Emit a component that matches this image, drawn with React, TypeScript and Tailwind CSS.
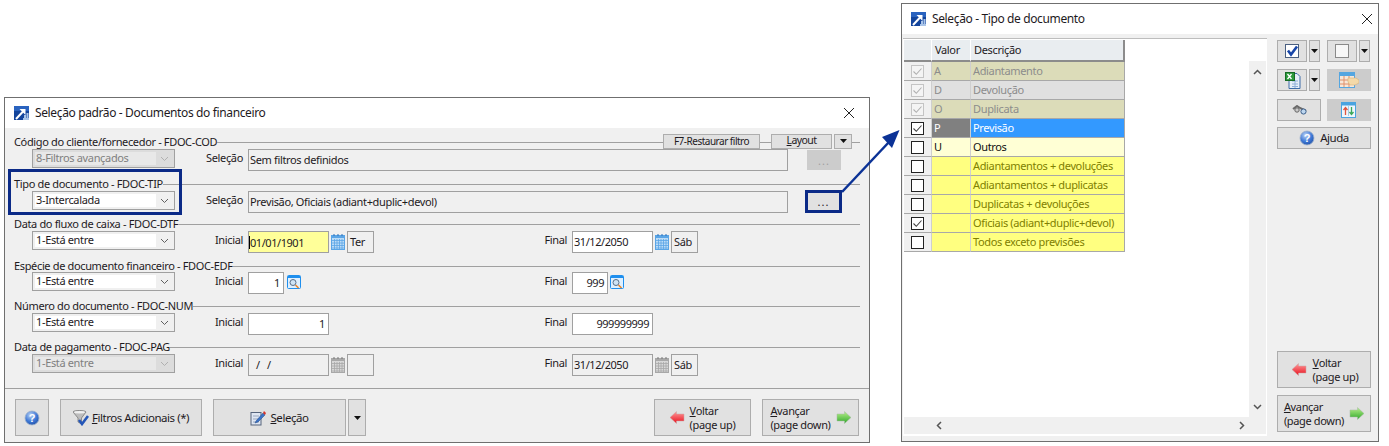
import React from "react";

const Logo = () => (
  <svg width="16" height="16" viewBox="0 0 16 16" className="shrink-0">
    <rect x="0" y="1" width="15" height="14" fill="#14459c" />
    <rect x="0" y="1" width="15" height="5" fill="#2a63bf" />
    <path d="M9 13h6v2H9zM10 10h2v3h-2zM12.500 8h2v5h-2z" fill="#a9c4e8" />
    <path d="M2 14 L9 6.500" stroke="#fff" strokeWidth="2" />
    <path d="M5.500 4h6v6z" fill="#fff" />
  </svg>
);

const CloseX = () => (
  <svg width="12" height="12" viewBox="0 0 12 12">
    <path d="M1 1l10 10M11 1L1 11" stroke="#222" strokeWidth="1" />
  </svg>
);

const Chevron = ({ muted }: { muted?: boolean }) => (
  <svg width="9" height="6" viewBox="0 0 9 6">
    <path d="M1 1l3.500 3.500L8 1" fill="none" stroke={muted ? "#b0b0b0" : "#606060"} strokeWidth="1" />
  </svg>
);

const Calendar = ({ off }: { off?: boolean }) => {
  const a = off ? "#a8a8a8" : "#5aa5e6";
  const b = off ? "#d8d8d8" : "#bcdcf7";
  return (
    <svg width="14" height="16" viewBox="0 0 14 16" className="shrink-0">
      <rect x="0.500" y="1.500" width="13" height="14" fill={b} stroke={a} />
      <rect x="1" y="1" width="12" height="3" fill={a} />
      <path d="M1 6.500h12M1 9h12M1 11.500h12M1 14h12M3.500 5v10M6 5v10M8.500 5v10M11 5v10" stroke={a} strokeWidth="0.800" />
      <path d="M3 0v2M7 0v2M11 0v2" stroke={off ? "#777" : "#2a6fb8"} />
    </svg>
  );
};

const Lookup = () => (
  <svg width="14" height="14" viewBox="0 0 14 14" className="shrink-0">
    <rect x="0.500" y="0.500" width="13" height="13" rx="1" fill="#dff0ff" stroke="#1f8fee" />
    <rect x="1" y="1" width="12" height="2" fill="#1f8fee" />
    <circle cx="6" cy="7.500" r="3" fill="#cfe4f5" stroke="#5a6f88" />
    <path d="M8.500 10l3 3" stroke="#e8862a" strokeWidth="1.600" />
  </svg>
);

const Help = ({ size = 16, id }: { size?: number; id: string }) => (
  <svg width={size} height={size} viewBox="0 0 16 16" className="shrink-0">
    <defs>
      <radialGradient id={id} cx="0.400" cy="0.300" r="0.800">
        <stop offset="0" stopColor="#bcd3f5" />
        <stop offset="0.550" stopColor="#3f79d6" />
        <stop offset="1" stopColor="#1c4aa0" />
      </radialGradient>
    </defs>
    <circle cx="8" cy="8" r="7" fill={`url(#${id})`} stroke="#9fb2cc" strokeWidth="0.800" />
    <text x="8" y="12" textAnchor="middle" fontSize="11" fontWeight="700" fill="#fff" fontFamily="Liberation Sans">?</text>
  </svg>
);

const Funnel = () => (
  <svg width="16" height="16" viewBox="0 0 16 16" className="shrink-0">
    <path d="M0 2C0 0 13 0 13 2L8.500 8v6l-3.500-2V8z" fill="#bdbdbd" stroke="#6f6f6f" strokeWidth="0.700" />
    <ellipse cx="6.500" cy="2.200" rx="5.500" ry="1.200" fill="#f0f0f0" />
    <path d="M6 10l3 4 6-8" fill="none" stroke="#2456b8" strokeWidth="2.600" />
  </svg>
);

const Pencil = () => (
  <svg width="16" height="16" viewBox="0 0 16 16" className="shrink-0">
    <rect x="1" y="2.500" width="10" height="12.500" fill="#dfe6f2" stroke="#56647c" strokeWidth="1" />
    <path d="M3 6h6M3 9h6M3 12h6" stroke="#9aa8bf" />
    <path d="M6 11l7-8 2 2-7 7-3 1z" fill="#3a72c8" stroke="#254a85" strokeWidth="0.500" />
    <path d="M13 3l1-2 2 2-1 2z" fill="#d8352a" />
  </svg>
);

const ArrowLeft = ({ id }: { id: string }) => (
  <svg width="15" height="13" viewBox="0 0 15 13" className="shrink-0">
    <defs>
      <linearGradient id={id} x1="0" y1="0" x2="0" y2="1">
        <stop offset="0" stopColor="#ff9a9a" />
        <stop offset="1" stopColor="#e8101e" />
      </linearGradient>
    </defs>
    <path d="M0 6.500L6.500 0.500V3H14V10H6.500V12.500z" fill={`url(#${id})`} stroke="#c9a5a5" strokeWidth="0.500" />
  </svg>
);

const ArrowRight = ({ id }: { id: string }) => (
  <svg width="15" height="13" viewBox="0 0 15 13" className="shrink-0">
    <defs>
      <linearGradient id={id} x1="0" y1="0" x2="0" y2="1">
        <stop offset="0" stopColor="#b8f08a" />
        <stop offset="1" stopColor="#2fa82a" />
      </linearGradient>
    </defs>
    <path d="M15 6.500L8.500 0.500V3H1V10H8.500V12.500z" fill={`url(#${id})`} stroke="#a5b8a5" strokeWidth="0.500" />
  </svg>
);

const DropGlyph = () => (
  <svg width="7" height="4" viewBox="0 0 7 4">
    <path d="M0 0h7L3.500 4z" fill="#111" />
  </svg>
);

const Btn = ({ className = "", children }: { className?: string; children?: React.ReactNode }) => (
  <div className={`flex items-center justify-center border shrink-0 ${className}`}>{children}</div>
);
const ON = "bg-[#e1e1e1] border-[#adadad]";
const DIS = "bg-[#cccccc] border-[#cccccc]";

const Combo = ({ value, off }: { value: string; off?: boolean }) => (
  <div className={`w-[143px] h-[19px] shrink-0 flex border border-[#a0a0a0] p-[2px] ${off ? "bg-[#dcdcdc]" : "bg-[#f0f0f0]"}`}>
    <div className={`w-[121px] h-[13px] flex items-center pl-[1px] ${off ? "bg-[#e8e8e8] text-[#808080]" : "bg-white"}`}>{value}</div>
    <div className="flex-1 flex items-center justify-center pl-[1px]">
      <Chevron muted={off} />
    </div>
  </div>
);

const Field = ({ className = "", right, children }: { className?: string; right?: boolean; children?: React.ReactNode }) => (
  <div className={`h-[22px] shrink-0 flex items-center border border-[#a0a0a0] ${right ? "justify-end" : ""} ${className}`}>
    {children}
  </div>
);

const Section = ({ title, className, legendClass = "h-[14px]", extra, children }: { title: string; className: string; legendClass?: string; extra?: React.ReactNode; children?: React.ReactNode }) => (
  <div className={`pl-[9px] pr-[9px] ${className}`}>
    <div className={`flex items-center ${legendClass}`}>
      <span className="whitespace-nowrap">{title}</span>
      {extra ?? <div className="flex-1 h-px bg-[#a0a0a0]" />}
    </div>
    {children}
  </div>
);

const Row = ({ value, off, label, left, final }: { value: string; off?: boolean; label: string; left: React.ReactNode; final?: React.ReactNode }) => (
  <div className="flex items-start">
    <div className="w-[506px] pl-[18px] flex items-start">
      <Combo value={value} off={off} />
      <div className="w-[73px] h-[19px] flex items-center justify-end pr-[5px] shrink-0">{label}</div>
      {left}
    </div>
    {final && (
      <div className="flex items-start">
        <div className="w-[52px] h-[19px] flex items-center justify-end pr-[5px] shrink-0">Final</div>
        {final}
      </div>
    )}
  </div>
);

const DateGroup = ({ date, day, off, caret, yellow }: { date: React.ReactNode; day?: string; off?: boolean; caret?: boolean; yellow?: boolean }) => (
  <div className="flex items-start">
    <Field className={`w-[81px] tracking-[-0.45px] ${yellow ? "bg-[#ffff99]" : off ? "bg-[#f0f0f0]" : "bg-white"}`}>
      {caret ? <span className="border-l border-black leading-[13px]">{date}</span> : <span className="pl-px">{date}</span>}
    </Field>
    <div className="ml-[2px] mt-[3px]">
      <Calendar off={off} />
    </div>
    <div className="ml-[2px] w-[27px] h-[22px] border border-[#a0a0a0] flex items-center pl-[2px] bg-[#f0f0f0]">{day}</div>
  </div>
);

const rows: { v: string; d: string; check: "dis" | "on" | "off"; kind: string }[] = [
  { v: "A", d: "Adiantamento", check: "dis", kind: "tan" },
  { v: "D", d: "Devolução", check: "dis", kind: "gray" },
  { v: "O", d: "Duplicata", check: "dis", kind: "tan" },
  { v: "P", d: "Previsão", check: "on", kind: "sel" },
  { v: "U", d: "Outros", check: "off", kind: "cream" },
  { v: "", d: "Adiantamentos + devoluções", check: "off", kind: "yel" },
  { v: "", d: "Adiantamentos + duplicatas", check: "off", kind: "yel" },
  { v: "", d: "Duplicatas + devoluções", check: "off", kind: "yel" },
  { v: "", d: "Oficiais (adiant+duplic+devol)", check: "on", kind: "yel" },
  { v: "", d: "Todos exceto previsões", check: "off", kind: "yel" },
];

const cellStyle: Record<string, [string, string]> = {
  tan: ["bg-[#dcdcb9] text-[#8c8c8c]", "bg-[#dcdcb9] text-[#8c8c8c]"],
  gray: ["bg-[#e0e0e0] text-[#8c8c8c]", "bg-[#e0e0e0] text-[#8c8c8c]"],
  sel: ["bg-[#808080] text-white", "bg-[#3399ff] text-white"],
  cream: ["bg-[#ffffd5] text-[#111]", "bg-[#ffffd5] text-[#111]"],
  yel: ["bg-[#ffff80] text-[#808000]", "bg-[#ffff80] text-[#808000]"],
};

const Check = ({ state }: { state: "dis" | "on" | "off" }) => (
  <svg width="13" height="13" viewBox="0 0 13 13">
    <rect x="0.500" y="0.500" width="12" height="12" fill={state === "dis" ? "#f4f4f4" : "#fff"} stroke={state === "dis" ? "#c4c4c4" : "#222"} />
    {state !== "off" && <path d="M2.500 6.500l2.800 2.800L10.500 3.500" fill="none" stroke={state === "dis" ? "#b0b0b0" : "#444"} strokeWidth="1.100" />}
  </svg>
);

const Dots = ({ muted }: { muted?: boolean }) => (
  <span className={`tracking-[1px] leading-none ${muted ? "text-[#a0a0a0]" : ""}`}>...</span>
);

export default function App() {
  return (
    <div className="relative w-[1389px] h-[446px] bg-white overflow-hidden font-['Noto_Sans',sans-serif] text-[11px] tracking-[-0.35px] text-[#1e1a1e]">
      {/* left window */}
      <div className="absolute left-[4px] top-[97px] w-[866px] h-[346px] border border-[#6f6f6f] bg-[#f0f0f0] flex flex-col">
        <div className="h-[30px] bg-white flex items-center pl-[9px] pr-[14px] gap-[5px] text-[12px] tracking-[-0.37px]">
          <Logo />
          <span className="flex-1">Seleção padrão - Documentos do financeiro</span>
          <CloseX />
        </div>
        <div className="flex-1 pt-[7px] flex flex-col">
          <Section
            title="Código do cliente/fornecedor - FDOC-COD"
            className="h-[42px]"
            extra={
              <div className="flex-1 flex items-center">
                <div className="flex-1 h-px bg-[#a0a0a0]" />
                <Btn className={`w-[97px] h-[15px] -mt-[2px] text-[10px] tracking-[-0.5px] ${ON}`}>F7-Restaurar filtro</Btn>
                <div className="w-[11px] h-px bg-[#a0a0a0]" />
                <Btn className={`w-[61px] h-[15px] -mt-[2px] text-[10.500px] tracking-[-0.6px] ${ON}`}>
                  <span><u>L</u>ayout</span>
                </Btn>
                <Btn className={`w-[18px] h-[15px] -mt-[2px] ml-[2px] ${ON}`}><DropGlyph /></Btn>
                <div className="w-[8px] h-px bg-[#a0a0a0]" />
              </div>
            }
          >
            <div className="flex items-start pl-[18px]">
              <Combo value="8-Filtros avançados" off />
              <div className="w-[73px] h-[19px] flex items-center justify-end pr-[5px] shrink-0">Seleção</div>
              <Field className="w-[540px] pl-[1px] bg-[#f0f0f0]">Sem filtros definidos</Field>
              <Btn className={`w-[34px] h-[20px] ml-[19px] mt-[1px] ${DIS}`}><Dots muted /></Btn>
            </div>
          </Section>
          <Section title="Tipo de documento - FDOC-TIP" className="h-[40px]">
            <div className="flex items-start pl-[18px]">
              <Combo value="3-Intercalada" />
              <div className="w-[73px] h-[19px] flex items-center justify-end pr-[5px] shrink-0">Seleção</div>
              <Field className="w-[540px] pl-[1px] bg-[#f0f0f0]">Previsão, Oficiais (adiant+duplic+devol)</Field>
              <Btn className={`w-[35px] h-[21px] ml-[18px] ${ON}`}><Dots /></Btn>
            </div>
          </Section>
          <Section title="Data do fluxo de caixa - FDOC-DTF" className="h-[43px]">
            <Row value="1-Está entre" label="Inicial" left={<DateGroup date="01/01/1901" day="Ter" caret yellow />} final={<DateGroup date="31/12/2050" day="Sáb" />} />
          </Section>
          <Section title="Espécie de documento financeiro - FDOC-EDF" className="h-[39px]" legendClass="h-[12px]">
            <Row
              value="1-Está entre"
              label="Inicial"
              left={
                <div className="flex items-start">
                  <Field right className="w-[36px] pr-[3px] bg-white">1</Field>
                  <div className="ml-[3px] mt-[3px]"><Lookup /></div>
                </div>
              }
              final={
                <div className="flex items-start">
                  <Field right className="w-[36px] pr-[3px] bg-white tracking-[-0.45px]">999</Field>
                  <div className="ml-[2px] mt-[3px]"><Lookup /></div>
                </div>
              }
            />
          </Section>
          <Section title="Número do documento - FDOC-NUM" className="h-[42px]">
            <Row
              value="1-Está entre"
              label="Inicial"
              left={<Field right className="w-[81px] pr-[3px] bg-white">1</Field>}
              final={<Field right className="w-[81px] pr-[3px] bg-white tracking-[-0.45px]">999999999</Field>}
            />
          </Section>
          <Section title="Data de pagamento - FDOC-PAG" className="h-[47px]" legendClass="h-[13px]">
            <Row
              value="1-Está entre"
              off
              label="Inicial"
              left={<DateGroup date={<span className="pl-[6px] tracking-[7px]">//</span>} off />}
              final={<DateGroup date="31/12/2050" day="Sáb" off />}
            />
          </Section>
          <div className="border-t border-[#a0a0a0] flex-1 pt-[10px] pl-[10px] pr-[10px] flex items-start">
            <Btn className={`w-[34px] h-[37px] ${ON}`}><Help id="h1" /></Btn>
            <Btn className={`w-[142px] h-[37px] ml-[11px] gap-[3px] text-[11.500px] tracking-[-0.45px] ${ON}`}>
              <Funnel />
              <span><u>F</u>iltros Adicionais (*)</span>
            </Btn>
            <Btn className={`w-[133px] h-[37px] ml-[11px] gap-[4px] text-[11.500px] tracking-[-0.45px] ${ON}`}>
              <Pencil />
              <span><u>S</u>eleção</span>
            </Btn>
            <Btn className={`w-[18px] h-[37px] ml-[2px] ${ON}`}><DropGlyph /></Btn>
            <Btn className={`w-[97px] h-[37px] ml-auto gap-[5px] ${ON}`}>
              <ArrowLeft id="al1" />
              <span className="leading-[14px]"><u>V</u>oltar<br />(page up)</span>
            </Btn>
            <Btn className={`w-[97px] h-[37px] ml-[11px] gap-[5px] ${ON}`}>
              <span className="leading-[14px]"><u>A</u>vançar<br />(page down)</span>
              <ArrowRight id="ar1" />
            </Btn>
          </div>
        </div>
      </div>

      {/* right window */}
      <div className="absolute left-[901px] top-[3px] w-[478px] h-[439px] border border-[#6f6f6f] bg-[#f0f0f0] flex flex-col">
        <div className="h-[30px] bg-white flex items-center pl-[9px] pr-[5px] gap-[5px] text-[12px] tracking-[-0.37px]">
          <Logo />
          <span className="flex-1">Seleção - Tipo de documento</span>
          <CloseX />
        </div>
        <div className="flex-1 flex min-h-0">
          <div className="ml-[1px] mt-[4px] mb-[5px] w-[364px] bg-white border-t border-[#bdbdbd] flex flex-col">
            <div className="flex-1 flex min-h-0">
              <div className="flex-1 pl-[1px] pt-[1px]">
                <div className="grid grid-cols-[27px_39px_155px] w-[221px]">
                  <div className="h-[22px] bg-[#e9edf0] border-b-2 border-[#8c8c8c]" />
                  <div className="h-[22px] pt-[1px] bg-[#e9edf0] border-b-2 border-l border-[#8c8c8c] border-l-white flex items-center pl-[3px]">Valor</div>
                  <div className="h-[22px] pt-[1px] bg-[#e9edf0] border-b-2 border-r-2 border-l border-[#8c8c8c] border-l-white flex items-center pl-[3px]">Descrição</div>
                  {rows.map((r) => (
                    <React.Fragment key={r.d}>
                      <div className="h-[19px] bg-[#f0f0f0] border-b border-[#a8a8a8] flex items-center justify-center pr-[1px]">
                        <Check state={r.check} />
                      </div>
                      <div className={`h-[19px] border-b border-b-[#a8a8a8] border-l border-l-[#cfcfcf] pl-[2px] flex items-center ${cellStyle[r.kind][0]}`}>{r.v}</div>
                      <div className={`h-[19px] border-b border-b-[#a8a8a8] border-l border-l-[#cfcfcf] border-r border-r-[#a8a8a8] pl-[2px] flex items-center whitespace-nowrap ${cellStyle[r.kind][1]}`}>{r.d}</div>
                    </React.Fragment>
                  ))}
                </div>
              </div>
              <div className="w-[17px] mr-[1px] mt-[22px] bg-[#f0f0f0] flex flex-col items-center justify-between pt-[8px] pb-[7px]">
                <svg width="9" height="6" viewBox="0 0 9 6"><path d="M1 5l3.500-3.500L8 5" fill="none" stroke="#555" strokeWidth="1.500" /></svg>
                <svg width="9" height="6" viewBox="0 0 9 6"><path d="M1 1l3.500 3.500L8 1" fill="none" stroke="#555" strokeWidth="1.500" /></svg>
              </div>
            </div>
            <div className="h-[17px] mb-[2px] ml-[1px] mr-[1px] bg-[#f0f0f0] flex items-center justify-between pl-[32px] pr-[21px]">
              <svg width="6" height="9" viewBox="0 0 6 9"><path d="M5 1L1.500 4.500 5 8" fill="none" stroke="#555" strokeWidth="1.500" /></svg>
              <svg width="6" height="9" viewBox="0 0 6 9"><path d="M1 1l3.500 3.500L1 8" fill="none" stroke="#555" strokeWidth="1.500" /></svg>
            </div>
          </div>
          <div className="flex-1 pl-[10px] pt-[6px] pb-[9px] flex flex-col">
            <div className="flex">
              <Btn className={`w-[30px] h-[22px] ${ON}`}>
                <svg width="14" height="14" viewBox="0 0 14 14">
                  <rect x="0.500" y="0.500" width="13" height="13" fill="#fff" stroke="#4a5f80" />
                  <path d="M3 6.500l3 4 6-8" fill="none" stroke="#1846a8" strokeWidth="2.600" />
                </svg>
              </Btn>
              <Btn className={`w-[11px] h-[22px] ml-[2px] ${ON}`}><DropGlyph /></Btn>
              <Btn className={`w-[30px] h-[22px] ml-[7px] ${ON}`}>
                <svg width="14" height="14" viewBox="0 0 14 14"><rect x="0.500" y="0.500" width="13" height="13" fill="#f7f7f7" stroke="#8a8a8a" /></svg>
              </Btn>
              <Btn className={`w-[11px] h-[22px] ml-[2px] ${ON}`}><DropGlyph /></Btn>
            </div>
            <div className="flex mt-[7px]">
              <Btn className={`w-[30px] h-[22px] ${ON}`}>
                <svg width="17" height="18" viewBox="0 0 17 18">
                  <path d="M5 2.500h8l3 3v12H5z" fill="#e6eef8" stroke="#3f6da8" />
                  <path d="M8 10h6M8 13h6M8 15.500h6M11 9v8" stroke="#8fb0d8" />
                  <rect x="1.500" y="1.500" width="9" height="8" fill="#2c9a3c" stroke="#156a24" />
                  <path d="M3.500 3l4 5M7.500 3l-4 5" stroke="#fff" strokeWidth="1.300" />
                </svg>
              </Btn>
              <Btn className={`w-[11px] h-[22px] ml-[2px] ${ON}`}><DropGlyph /></Btn>
              <Btn className={`w-[44px] h-[22px] ml-[7px] ${DIS}`}>
                <svg width="20" height="16" viewBox="0 0 20 16">
                  <rect x="0.500" y="0.500" width="15" height="15" fill="#f7e7d8" stroke="#55a6e0" />
                  <rect x="1" y="1" width="14" height="3" fill="#55a6e0" />
                  <path d="M5 4v11M10 4v11M1 8h14M1 12h14" stroke="#e0906a" />
                  <path d="M9 6h8l3 2v3l-4 2h-5l-2-3z" fill="#f4d9a8" stroke="#d8b27a" strokeWidth="0.600" />
                </svg>
              </Btn>
            </div>
            <div className="flex mt-[8px]">
              <Btn className={`w-[44px] h-[22px] ${ON}`}>
                <svg width="15" height="10" viewBox="0 0 15 10">
                  <path d="M1 4l4-3 3 2 6 3" fill="none" stroke="#6a6a6a" strokeWidth="2" />
                  <circle cx="5" cy="5" r="2.200" fill="#c9c9c9" stroke="#666" />
                  <circle cx="11.500" cy="6.500" r="2.600" fill="#bcd6ef" stroke="#3d5f8a" />
                </svg>
              </Btn>
              <Btn className={`w-[44px] h-[22px] ml-[6px] ${DIS}`}>
                <svg width="16" height="16" viewBox="0 0 16 16">
                  <rect x="0.500" y="0.500" width="14" height="15" fill="#eef6fc" stroke="#4aa3e0" />
                  <rect x="1" y="1" width="13" height="2.500" fill="#4aa3e0" />
                  <path d="M7.500 4v10" stroke="#a8cbe6" />
                  <path d="M4.500 13V6M2.500 8l2-2.500 2 2.500" fill="none" stroke="#e0553f" strokeWidth="1.300" />
                  <path d="M10.500 5v7M8.500 10l2 2.500 2-2.500" fill="none" stroke="#3da85a" strokeWidth="1.300" />
                </svg>
              </Btn>
            </div>
            <Btn className={`w-[94px] h-[22px] mt-[6px] gap-[5px] text-[11.500px] tracking-[-0.45px] ${ON}`}>
              <Help id="h2" />
              <span>A<u>j</u>uda</span>
            </Btn>
            <Btn className={`w-[94px] h-[37px] mt-auto gap-[6px] pl-[2px] ${ON}`}>
              <ArrowLeft id="al2" />
              <span className="leading-[14px]"><u>V</u>oltar<br />(page up)</span>
            </Btn>
            <Btn className={`w-[94px] h-[37px] mt-[7px] gap-[5px] ${ON}`}>
              <span className="leading-[14px]"><u>A</u>vançar<br />(page down)</span>
              <ArrowRight id="ar2" />
            </Btn>
          </div>
        </div>
      </div>

      {/* annotations */}
      <div className="absolute left-[8px] top-[169px] w-[174px] h-[46px] border-[3px] border-[#0b2a87]" />
      <div className="absolute left-[805px] top-[190px] w-[37px] h-[23px] border-[3px] border-[#0b2a87]" />
      <svg className="absolute left-[835px] top-[125px]" width="70" height="75" viewBox="0 0 70 75">
        <path d="M7 67L54 17" stroke="#0b3296" strokeWidth="2.500" />
        <path d="M64.500 5L47 12l10 11z" fill="#0b3296" />
      </svg>
    </div>
  );
}
